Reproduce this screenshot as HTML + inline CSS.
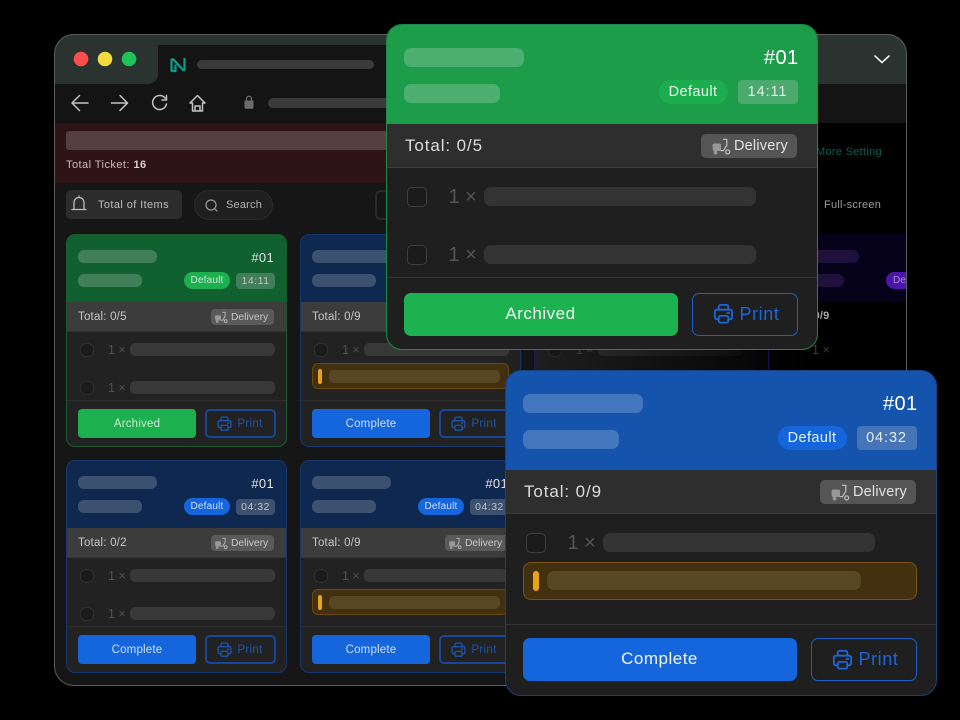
<!DOCTYPE html>
<html lang="en">
<head>
<meta charset="utf-8">
<title>Tickets</title>
<style>
*{box-sizing:border-box;margin:0;padding:0}
html,body{width:960px;height:720px;background:#000;overflow:hidden;font-family:"Liberation Sans",sans-serif}
.a,.a div,.a svg{position:absolute}
#win{left:54px;top:34px;width:853px;height:652px;border-radius:20px;background:#161616;overflow:hidden;filter:blur(.35px)}
#frame{left:54px;top:34px;width:853px;height:652px;border-radius:20px;border:1.5px solid #5c5c5c;pointer-events:none}
.f{display:flex;align-items:center;justify-content:center;white-space:nowrap}
.l{justify-content:flex-start}.r{justify-content:flex-end}
/* small cards; coordinates relative to the window */
.c{width:221px;height:213px;border-radius:9px;background:#222;border:1px solid;overflow:hidden}
.h{left:-1px;top:-1px;width:221px;height:68px}
.t1{left:11px;top:15px;width:79px;height:13px;border-radius:6px}
.t2{left:11px;top:39px;width:64px;height:13px;border-radius:6px}
.no{right:12px;top:14px;height:16px;font-size:13px;color:#e4e4e4;letter-spacing:.3px}
.pl{left:117px;top:37px;width:46px;height:17px;border-radius:9px;font-size:10px;color:#cfe3d6;letter-spacing:.2px}
.tm{left:169px;top:38px;width:39px;height:16px;border-radius:4px;font-size:10.5px;color:#c4c4c4;letter-spacing:.5px}
.s{left:-1px;top:67px;width:221px;height:30px;background:#3c3c3c;border-bottom:1px solid #333}
.tt{left:12px;top:7px;height:16px;font-size:11.5px;color:#c6c6c6;letter-spacing:.2px}
.dl{left:145px;top:7px;width:63px;height:16px;border-radius:4px;background:#5a5a5a;font-size:10.3px;color:#c8c8c8;padding-left:20px}
.cb{left:13px;width:14px;height:14px;border-radius:6px;background:#1b1b1b;border:1px solid #2f2f2f}
.n{left:41px;height:14px;font-size:12.5px;color:#505050;width:20px}
.br{left:63px;width:145px;height:13px;border-radius:5px;background:#383838}
.dv{left:-1px;top:165px;width:221px;height:1px;background:#2e2e2e}
.am{left:11px;top:128px;width:197px;height:26px;border-radius:6px;background:#43300f;border:1px solid #664810}
.am i{position:absolute;left:5px;top:5px;width:4px;height:15px;border-radius:2px;background:#e8a317}
.am b{position:absolute;left:16px;top:6px;width:171px;height:13px;border-radius:5px;background:#574722}
.bt{left:11px;top:174px;width:118px;height:29px;border-radius:4px;font-size:11.5px;letter-spacing:.2px}
.pr{left:138px;top:174px;width:71px;height:29px;border-radius:5px;border:2px solid #17479a;font-size:11.5px;color:#1a55b0;padding-left:19px;letter-spacing:.3px}
.g{border-color:#1a5c30}.g .h{background:#11602f}.g .t1,.g .t2,.g .tm{background:#417e5a}.g .pl{background:#1cb04e}.g .bt{background:#1cb04e;color:#cfe8d8}
.b{border-color:#14386e}.b .h{background:#0f2850}.b .t1,.b .t2,.b .tm{background:#3c5070}.b .pl{background:#1565dc;color:#cfdff6}.b .bt{background:#1566dc;color:#cfdff6}
.p{border-color:#2a1570}.p .h{background:#140a3c}.p .t1,.p .t2{background:#3a2a5a}
/* large cards */
.L{width:432px;height:326px;border-radius:16px;background:#1f1f1f;border:1.5px solid;overflow:hidden}
.H{left:-1.5px;top:-1.5px;width:432px;height:100px}
.T1{left:17px;top:22.5px;width:120px;height:19px;border-radius:7px}
.T2{left:17px;top:58.5px;width:96px;height:19px;border-radius:7px}
.NO{right:18px;top:21px;height:24px;font-size:20px;color:#fff;letter-spacing:.4px}
.PL{left:272px;top:55px;width:69px;height:24px;border-radius:12px;font-size:14.5px;color:#e6f4ea;letter-spacing:.4px}
.TM{left:351px;top:55px;width:60px;height:24px;border-radius:4px;font-size:14.5px;color:#e6eee9;letter-spacing:.9px}
.S{left:-1.5px;top:98.5px;width:432px;height:44px;background:#2e2e2e;border-bottom:1px solid #3c3c3c}
.TT{left:20px;top:10px;height:24px;font-size:17px;color:#dcdcdc;letter-spacing:.9px}
.DL{left:316px;top:10px;width:96px;height:24px;border-radius:5px;background:#555;font-size:14.5px;color:#e2e2e2;padding-left:33px;letter-spacing:.2px}
.CB{left:20px;width:20px;height:20px;border-radius:5px;background:#1b1b1b;border:1.5px solid #3f3f3f}
.N{left:62px;height:20px;font-size:20px;color:#555;width:30px}
.BR{left:97px;width:272px;height:19px;border-radius:7px;background:#333}
.DV{left:-1.5px;width:432px;height:1px;background:#333}
.BT{left:17px;width:274px;height:43px;border-radius:7px;font-size:17px;color:#f2f2f2;letter-spacing:.5px}
.PR{left:305px;width:106px;height:43px;border-radius:7px;border:1.5px solid #1a5fc8;font-size:18px;color:#1b66d8;padding-left:30px;letter-spacing:.6px}
</style>
</head>
<body>
<svg width="0" height="0" style="position:absolute">
<symbol id="pri" viewBox="0 0 24 24"><path d="M7 8V5a2 2 0 0 1 2-2h6a2 2 0 0 1 2 2v3M7 18H5a2 2 0 0 1-2-2v-6a2 2 0 0 1 2-2h14a2 2 0 0 1 2 2v6a2 2 0 0 1-2 2h-2M16 11.5h2" fill="none" stroke="currentColor" stroke-width="1.9" stroke-linecap="round"/><rect x="7" y="14.5" width="10" height="7" rx="1.8" fill="none" stroke="currentColor" stroke-width="1.9"/></symbol>
<symbol id="del" viewBox="0 0 24 24"><rect x="2" y="9" width="10" height="9" rx="1.8" fill="currentColor" opacity=".65"/><circle cx="5.5" cy="20" r="2.3" fill="currentColor" opacity=".65"/><path d="M15 4h4v7l-4 6.5h-3" fill="none" stroke="currentColor" stroke-width="1.5" stroke-linecap="round" stroke-linejoin="round"/><circle cx="20" cy="19" r="2.4" fill="none" stroke="currentColor" stroke-width="1.5"/></symbol>
</svg>

<div class="a">
<div id="win">
  <!-- title bar -->
  <div style="left:0;top:0;width:853px;height:90px;background:#141414"></div>
  <div style="left:0;top:0;width:853px;height:11px;background:#2a3330"></div>
  <div style="left:0;top:0;width:104px;height:50px;background:#2a3330;border-radius:0 0 10px 0"></div>
  <div style="left:740px;top:0;width:113px;height:50px;background:#2a3330"></div>
  <div style="left:104px;top:11px;width:640px;height:20px;background:#141414;border-radius:10px 0 0 0"></div>
  <div style="left:143px;top:26px;width:177px;height:9px;border-radius:5px;background:#3a3a3a"></div>
  <div style="left:214px;top:64px;width:300px;height:10px;border-radius:5px;background:#3a3a3a"></div>

  <!-- banner -->
  <div style="left:0;top:89px;width:853px;height:60px;background:#2e1416"></div>
  <div style="left:12px;top:97px;width:600px;height:19px;border-radius:3px;background:#533f41"></div>
  <div class="f l" style="left:12px;top:123px;height:16px;font-size:11px;color:#c6bcbc;letter-spacing:.45px">Total Ticket:&nbsp;<span style="color:#d8d0d0;font-weight:bold">16</span></div>

  <!-- toolbar -->
  <div class="f l" style="left:12px;top:156px;width:116px;height:29px;border-radius:5px;background:#2c2c2c;font-size:11px;color:#bdbdbd;padding-left:32px;letter-spacing:.4px">Total of Items</div>
  <svg style="left:14px;top:159px" width="22" height="22" viewBox="0 0 22 22" fill="none" stroke="#bdbdbd" stroke-width="1.3"><path d="M6 16V9.500a5 5 0 0 1 10 0V16M4 16.500h14M11 3v1.500" stroke-linecap="round"/></svg>
  <div class="f l" style="left:140px;top:156px;width:79px;height:30px;border-radius:15px;background:#1f1f1f;border:1px solid #2a2a2a;font-size:11px;color:#b4b4b4;padding-left:31px;letter-spacing:.2px">Search</div>
  <svg style="left:150px;top:164px" width="15" height="15" viewBox="0 0 15 15" fill="none" stroke="#9c9c9c" stroke-width="1.2"><circle cx="7" cy="7" r="5"/><path d="M11 11l2.300 2.300"/></svg>
  <div style="left:321px;top:156px;width:40px;height:30px;border-radius:6px;border:2px solid #2a2a2a"></div>

  <!-- col 1 row 1 -->
  <div class="c g" style="left:12px;top:200px">
    <div class="h"></div><div class="t1"></div><div class="t2"></div>
    <div class="no f">#01</div><div class="pl f">Default</div><div class="tm f">14:11</div>
    <div class="s"><div class="tt f">Total: 0/5</div><div class="dl f l">Delivery</div><svg style="left:148px;top:8px;color:#bbb" width="14" height="14"><use href="#del"/></svg></div>
    <div class="cb" style="top:108px"></div><div class="n f l" style="top:108px">1 ×</div><div class="br" style="top:108px"></div>
    <div class="cb" style="top:146px"></div><div class="n f l" style="top:146px">1 ×</div><div class="br" style="top:146px"></div>
    <div class="dv"></div><div class="bt f">Archived</div><div class="pr f">Print</div><svg style="left:149px;top:180px;color:#1a55b0" width="17" height="17"><use href="#pri"/></svg>
  </div>
  <!-- col 2 row 1 -->
  <div class="c b" style="left:246px;top:200px">
    <div class="h"></div><div class="t1"></div><div class="t2"></div>
    <div class="no f">#01</div><div class="pl f">Default</div><div class="tm f">04:32</div>
    <div class="s"><div class="tt f">Total: 0/9</div><div class="dl f l">Delivery</div><svg style="left:148px;top:8px;color:#bbb" width="14" height="14"><use href="#del"/></svg></div>
    <div class="cb" style="top:108px"></div><div class="n f l" style="top:108px">1 ×</div><div class="br" style="top:108px"></div>
    <div class="am"><i></i><b></b></div>
    <div class="dv"></div><div class="bt f">Complete</div><div class="pr f">Print</div><svg style="left:149px;top:180px;color:#1a55b0" width="17" height="17"><use href="#pri"/></svg>
  </div>
  <!-- col 3 row 1 -->
  <div class="c p" style="left:480px;top:200px">
    <div class="h"></div>
    <div class="s"></div>
    <div class="cb" style="top:108px"></div><div class="n f l" style="top:108px">1 ×</div><div class="br" style="top:108px"></div>
  </div>
  <!-- col 1 row 2 -->
  <div class="c b" style="left:12px;top:426px">
    <div class="h"></div><div class="t1"></div><div class="t2"></div>
    <div class="no f">#01</div><div class="pl f">Default</div><div class="tm f">04:32</div>
    <div class="s"><div class="tt f">Total: 0/2</div><div class="dl f l">Delivery</div><svg style="left:148px;top:8px;color:#bbb" width="14" height="14"><use href="#del"/></svg></div>
    <div class="cb" style="top:108px"></div><div class="n f l" style="top:108px">1 ×</div><div class="br" style="top:108px"></div>
    <div class="cb" style="top:146px"></div><div class="n f l" style="top:146px">1 ×</div><div class="br" style="top:146px"></div>
    <div class="dv"></div><div class="bt f">Complete</div><div class="pr f">Print</div><svg style="left:149px;top:180px;color:#1a55b0" width="17" height="17"><use href="#pri"/></svg>
  </div>
  <!-- col 2 row 2 -->
  <div class="c b" style="left:246px;top:426px">
    <div class="h"></div><div class="t1"></div><div class="t2"></div>
    <div class="no f">#01</div><div class="pl f">Default</div><div class="tm f">04:32</div>
    <div class="s"><div class="tt f">Total: 0/9</div><div class="dl f l">Delivery</div><svg style="left:148px;top:8px;color:#bbb" width="14" height="14"><use href="#del"/></svg></div>
    <div class="cb" style="top:108px"></div><div class="n f l" style="top:108px">1 ×</div><div class="br" style="top:108px"></div>
    <div class="am"><i></i><b></b></div>
    <div class="dv"></div><div class="bt f">Complete</div><div class="pr f">Print</div><svg style="left:149px;top:180px;color:#1a55b0" width="17" height="17"><use href="#pri"/></svg>
  </div>

  <!-- fade to black on the right -->
  <div style="left:0;top:89px;width:853px;height:563px;background:linear-gradient(90deg,rgba(0,0,0,0) 52%,rgba(0,0,0,.75) 80%,#000 89%)"></div>

  <!-- items remaining on top of the fade -->
  <div class="f l" style="left:762px;top:110px;height:16px;font-size:11px;color:#0a5f50;letter-spacing:.3px">More Setting</div>
  <div class="f l" style="left:770px;top:163px;height:16px;font-size:11px;color:#9c9c9c;letter-spacing:.25px">Full-screen</div>
  <div style="left:714px;top:200px;width:139px;height:68px;background:#05021a;border-left:1px solid #1c1050;border-radius:9px 0 0 0"></div>
  <div style="left:726px;top:216px;width:79px;height:13px;border-radius:6px;background:#20103c"></div>
  <div style="left:726px;top:240px;width:64px;height:13px;border-radius:6px;background:#20103c"></div>
  <div class="f l" style="left:832px;top:238px;width:46px;height:17px;border-radius:9px;background:#4a17a8;font-size:10px;color:#a98ad8;padding-left:7px">Default</div>
  <div class="f l" style="left:726px;top:274px;height:16px;font-size:11px;color:#a8a8a8;font-weight:bold;letter-spacing:.2px">Total: 0/9</div>
  <div class="f l" style="left:758px;top:309px;height:14px;font-size:12.5px;color:#3c3c3c">1 ×</div>
  <div style="left:714px;top:200px;width:1px;height:200px;background:#1c1050"></div>
</div>
<div id="frame"></div>

<!-- toolbar icons -->
<svg style="left:0;top:0;filter:blur(.3px)" width="960" height="130" fill="none">
  <circle cx="81" cy="59" r="7.3" fill="#ff4d4d"/><circle cx="105" cy="59" r="7.3" fill="#f0dc3c"/><circle cx="129" cy="59" r="7.3" fill="#1fc35a"/>
  <path d="M171.500 71.500V59.500h2l9.500 10.500h1.500V58M175.500 64.500v6.500h-4" stroke="#0e9c8c" stroke-width="2.200" stroke-linejoin="round"/>
  <g stroke="#c4c4c4" stroke-width="1.500" stroke-linecap="round" stroke-linejoin="round">
    <path d="M88 103H72M79.500 95.500L72 103l7.500 7.500"/>
    <path d="M111.500 103H127.500M120 95.500l7.500 7.500-7.500 7.500"/>
    <path d="M165 98a7 7 0 1 0 1.500 6M166.500 95.500V100H162"/>
    <path d="M190 103l7.500-7.500 7.500 7.500h-2.500v8h-10v-8zM195 111v-5h5v5"/>
  </g>
  <path d="M244.500 101.500v6a1.200 1.200 0 0 0 1.200 1.200h6.600a1.200 1.200 0 0 0 1.200-1.200v-6a1 1 0 0 0-1-1h-7a1 1 0 0 0-1 1z" fill="#6c6c6c"/>
  <path d="M246.500 100.500v-1.800a2.500 2.500 0 0 1 5 0v1.800" stroke="#6c6c6c" stroke-width="1.300"/>
  <path d="M875 56l7 6.500 7-6.500" stroke="#f0f0f0" stroke-width="1.600" stroke-linecap="round" stroke-linejoin="round"/>
</svg>

<!-- large green -->
<div class="L" style="left:385.500px;top:24px;border-color:#1c8a45">
  <div class="H" style="background:#1d9d4a"></div>
  <div class="T1" style="background:#4cae6f"></div><div class="T2" style="background:#4cae6f"></div>
  <div class="NO f">#01</div>
  <div class="PL f" style="background:#1cae4e">Default</div>
  <div class="TM f" style="background:#4aa96c">14:11</div>
  <div class="S"><div class="TT f">Total: 0/5</div><div class="DL f l">Delivery</div><svg style="left:326px;top:12px;color:#bdbdbd" width="20" height="20"><use href="#del"/></svg></div>
  <div class="CB" style="top:162px"></div><div class="N f l" style="top:162px">1 ×</div><div class="BR" style="top:162px"></div>
  <div class="CB" style="top:220px"></div><div class="N f l" style="top:220px">1 ×</div><div class="BR" style="top:220px"></div>
  <div class="DV" style="top:252px"></div>
  <div class="BT f" style="top:267.500px;background:#1cb24f">Archived</div>
  <div class="PR f" style="top:267.500px">Print</div>
  <svg style="left:325px;top:277px;color:#1b66d8" width="23" height="23"><use href="#pri"/></svg>
</div>

<!-- large blue -->
<div class="L" style="left:504.500px;top:370px;border-color:#16427f">
  <div class="H" style="background:#1454ac"></div>
  <div class="T1" style="background:#4376bc"></div><div class="T2" style="background:#4376bc"></div>
  <div class="NO f">#01</div>
  <div class="PL f" style="background:#1565dc">Default</div>
  <div class="TM f" style="background:#4575b8">04:32</div>
  <div class="S"><div class="TT f">Total: 0/9</div><div class="DL f l">Delivery</div><svg style="left:326px;top:12px;color:#bdbdbd" width="20" height="20"><use href="#del"/></svg></div>
  <div class="CB" style="top:162px"></div><div class="N f l" style="top:162px">1 ×</div><div class="BR" style="top:162px"></div>
  <div style="left:17px;top:190.500px;width:394px;height:38px;border-radius:8px;background:#43300f;border:1.500px solid #7a5412"></div>
  <div style="left:27px;top:200px;width:6px;height:20px;border-radius:3px;background:#e8a317"></div>
  <div style="left:41px;top:199.500px;width:314px;height:19px;border-radius:7px;background:#574722"></div>
  <div class="DV" style="top:252.500px"></div>
  <div class="BT f" style="top:266.500px;background:#1566dc">Complete</div>
  <div class="PR f" style="top:266.500px">Print</div>
  <svg style="left:325px;top:277px;color:#1b66d8" width="23" height="23"><use href="#pri"/></svg>
</div>
</div>
</body>
</html>
